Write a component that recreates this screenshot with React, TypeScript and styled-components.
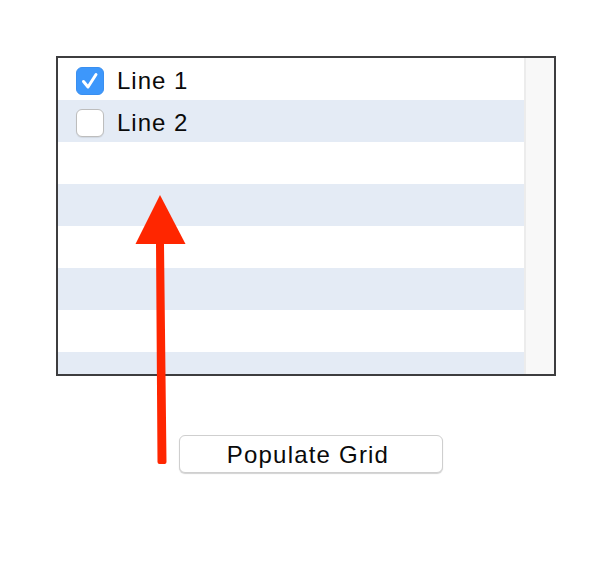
import styled, { createGlobalStyle } from 'styled-components';

const GlobalStyle = createGlobalStyle`
    body {
        margin: 0;
        background: #ffffff;
        font-family: "Liberation Sans", Arial, sans-serif;
    }
`

const Page = styled('div')`
    position: relative;
    width: 616px;
    height: 574px;
    padding: 56px 0 0 56px;
    box-sizing: border-box;
`

const GridFrame = styled('div')`
    width: 500px;
    height: 320px;
    box-sizing: border-box;
    border: 2px solid #3d3d3f;
    display: flex;
    overflow: hidden;
`

const Rows = styled('div')`
    flex: 1;
    display: flex;
    flex-direction: column;
    overflow: hidden;
`

const Row = styled('div')<{ $striped: boolean }>`
    flex: 0 0 42px;
    display: flex;
    align-items: center;
    padding: 4px 0 0 18px;
    box-sizing: border-box;
    gap: 13px;
    background: ${p => (p.$striped ? '#e4ebf5' : '#ffffff')};
`

const Box = styled('div')<{ $checked: boolean }>`
    width: 28px;
    height: 28px;
    box-sizing: border-box;
    border-radius: 6px;
    display: flex;
    align-items: center;
    justify-content: center;
    background: ${p => (p.$checked ? '#3d97fb' : '#ffffff')};
    border: 1px solid ${p => (p.$checked ? '#3a8ff0' : '#bdbdbd')};
    box-shadow: ${p => (p.$checked ? 'none' : '0 1px 1px rgba(0,0,0,0.08)')};
`

const Label = styled('span')`
    font-size: 24px;
    letter-spacing: 1px;
    color: #0a0a0a;
`

const Scroller = styled('div')`
    width: 30px;
    background: #f8f8f8;
    border-left: 2px solid #ececec;
    box-sizing: border-box;
`

const ButtonRow = styled('div')`
    margin: 59px 0 0 123px;
`

const Button = styled('button')`
    width: 264px;
    height: 38px;
    border: 1px solid #cfcfcf;
    border-radius: 6px;
    background: #ffffff;
    box-shadow: 0 1px 1px rgba(0, 0, 0, 0.18);
    font-family: "Liberation Sans", Arial, sans-serif;
    font-size: 24px;
    letter-spacing: 1.2px;
    color: #0a0a0a;
    padding: 1px 6px 0 0;
`

const Arrow = styled('svg')`
    position: absolute;
    left: 130px;
    top: 190px;
`

const lines = [
    { label: 'Line 1', checked: true },
    { label: 'Line 2', checked: false },
]

const App = () => {
    const rows = Array.from({ length: 8 }, (_, i) => lines[i])

    return (
        <>
            <GlobalStyle />
            <Page>
                <GridFrame>
                    <Rows>
                        {rows.map((line, key) => (
                            <Row key={key} $striped={key % 2 === 1}>
                                {line && (
                                    <>
                                        <Box $checked={line.checked}>
                                            {line.checked && (
                                                <svg width="22" height="22" viewBox="0 0 22 22">
                                                    <path d="M4.5 11.5 L9 17 L17 4.5" fill="none" stroke="#ffffff" strokeWidth="3" strokeLinecap="round" strokeLinejoin="round" />
                                                </svg>
                                            )}
                                        </Box>
                                        <Label>{line.label}</Label>
                                    </>
                                )}
                            </Row>
                        ))}
                    </Rows>
                    <Scroller />
                </GridFrame>
                <ButtonRow>
                    <Button>Populate Grid</Button>
                </ButtonRow>
                <Arrow width="60" height="280" viewBox="0 0 60 280">
                    <path d="M28 54 L32 54 L34.5 272 L29.5 272 Z" fill="#ff2600" stroke="#ff2600" strokeWidth="4" strokeLinejoin="round" />
                    <polygon points="30,5 55.5,54 5.5,54" fill="#ff2600" />
                </Arrow>
            </Page>
        </>
    )
}

export default App
